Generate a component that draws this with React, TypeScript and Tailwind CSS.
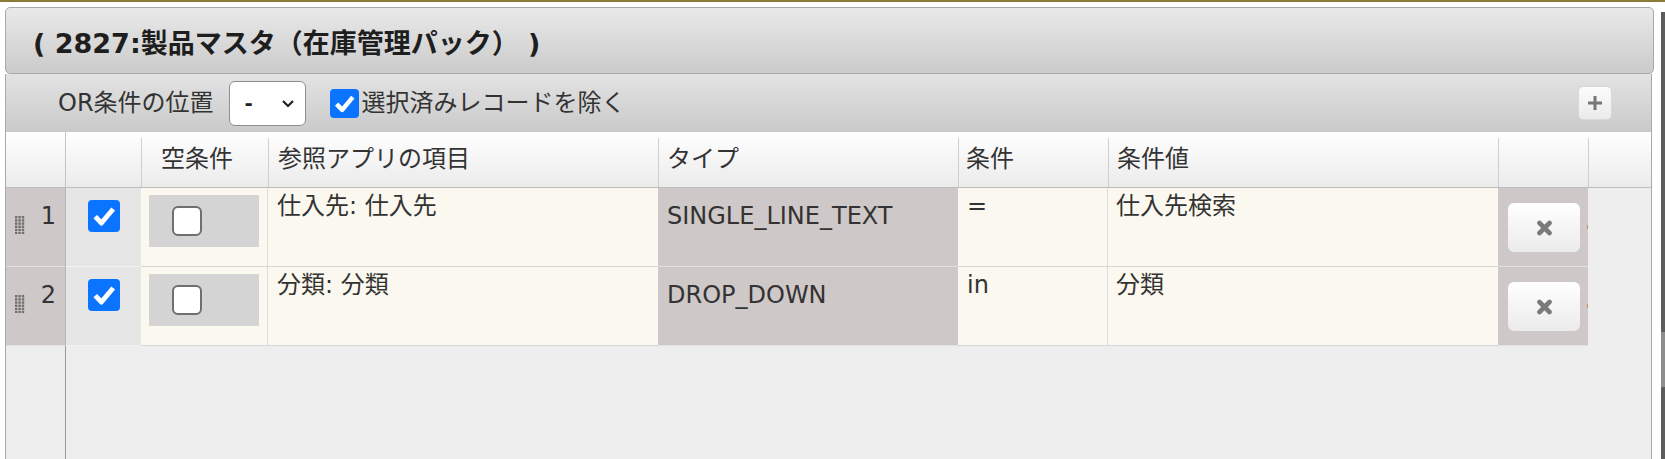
import React from "react";

type Condition = {
  no: number;
  field: string;
  type: string;
  op: string;
  value: string;
};

const conditions: Condition[] = [
  { no: 1, field: "仕入先: 仕入先", type: "SINGLE_LINE_TEXT", op: "=", value: "仕入先検索" },
  { no: 2, field: "分類: 分類", type: "DROP_DOWN", op: "in", value: "分類" },
];

function CheckedBox({ className }: { className: string }) {
  return (
    <span className={`flex items-center justify-center rounded-[4px] bg-[#0b74ff] ${className}`}>
      <svg viewBox="0 0 30 30" className="h-full w-full">
        <path d="M6.8 15.6 L12.6 21.6 L23.6 8.4" fill="none" stroke="#fff" strokeWidth="4.6" strokeLinejoin="round" />
      </svg>
    </span>
  );
}

function EmptyBox() {
  return <span className="block h-[30px] w-[30px] rounded-[6px] border-2 border-[#6f6f6f] bg-white" />;
}

function Grip() {
  const dots = [];
  for (let r = 0; r < 6; r++) {
    for (let c = 0; c < 3; c++) {
      dots.push(<rect key={`${r}-${c}`} x={c * 3.4} y={r * 3.2} width="2.4" height="2.4" />);
    }
  }
  return (
    <svg width="10" height="18" viewBox="0 0 10 18" className="fill-[#6e6e6e]">
      {dots}
    </svg>
  );
}

function CrossIcon() {
  return (
    <svg width="17" height="16" viewBox="0 0 17 16">
      <path d="M3.5 3 L13.5 13 M13.5 3 L3.5 13" stroke="#7a7a7a" strokeWidth="4.6" strokeLinecap="round" />
    </svg>
  );
}

function PlusIcon() {
  return (
    <svg width="14" height="14" viewBox="0 0 14 14" className="fill-[#777]">
      <rect x="0" y="5.5" width="14" height="3" />
      <rect x="5.5" y="0" width="3" height="14" />
    </svg>
  );
}

function Chevron() {
  return (
    <svg width="14" height="9" viewBox="0 0 14 9">
      <path d="M2 2 L7 7 L12 2" fill="none" stroke="#222" strokeWidth="2.2" />
    </svg>
  );
}

function PanelHeader() {
  return (
    <div className="flex h-[67px] shrink-0 items-center rounded-[5px] border border-[#a9a9a9] bg-gradient-to-b from-[#e9e9e9] to-[#cbcbcb] pl-[27px] pt-[8px]">
      <h1 className="text-[27px] font-bold text-[#1e1e1e]">( 2827:製品マスタ（在庫管理パック） )</h1>
    </div>
  );
}

function Toolbar() {
  return (
    <div className="flex h-[58px] shrink-0 items-center bg-gradient-to-b from-[#e3e3e3] to-[#cacaca] pl-[52px]">
      <span className="leading-none">OR条件の位置</span>
      <div className="ml-[15px] flex h-[45px] w-[77px] items-center justify-between rounded-[6px] border border-[#8f8f8f] bg-white pl-[15px] pr-[10px]">
        <span className="text-[20px] font-bold leading-none text-[#222]">-</span>
        <Chevron />
      </div>
      <CheckedBox className="ml-[24px] h-[29px] w-[29px]" />
      <span className="ml-[3px] leading-none">選択済みレコードを除く</span>
      <button className="ml-auto mr-[39px] flex h-[34px] w-[34px] items-center justify-center rounded-[5px] border border-[#d8d8d8] bg-gradient-to-b from-[#fbfbfb] to-[#ebebeb]">
        <PlusIcon />
      </button>
    </div>
  );
}

function TableHeader() {
  return (
    <div className="grid h-[56px] shrink-0 grid-cols-[60px_75px_127px_390px_300px_150px_390px_90px_1fr] border-b border-[#bdbdbd] bg-gradient-to-b from-white to-[#ebebeb] leading-[30px]">
      <div className="border-r border-[#c4c4c4]" />
      <div className="mt-[6px]" />
      <div className="mt-[6px] border-l border-[#cfcfcf] pl-[19px] pt-[6px]">空条件</div>
      <div className="mt-[6px] border-l border-[#cfcfcf] pl-[9px] pt-[6px]">参照アプリの項目</div>
      <div className="mt-[6px] border-l border-[#cfcfcf] pl-[8px] pt-[6px]">タイプ</div>
      <div className="mt-[6px] border-l border-[#cfcfcf] pl-[7px] pt-[6px]">条件</div>
      <div className="mt-[6px] border-l border-[#cfcfcf] pl-[8px] pt-[6px]">条件値</div>
      <div className="mt-[6px] border-l border-[#cfcfcf]" />
      <div className="mt-[6px] border-l border-[#cfcfcf]" />
    </div>
  );
}

function ConditionRow({ row }: { row: Condition }) {
  return (
    <div className="grid h-[79px] shrink-0 grid-cols-[60px_75px_127px_390px_300px_150px_390px_90px_1fr] leading-[30px]">
      <div className="flex items-start border-b border-r border-b-[#e4dfdf] border-r-[#b9b4b4] bg-[#cfc8c8]">
        <span className="ml-[9px] mt-[28px]">
          <Grip />
        </span>
        <span className="ml-auto mr-[9px] mt-[13px]">{row.no}</span>
      </div>
      <div className="flex justify-center border-b border-[#f1f1f1] bg-[#e6e6e6] pt-[12px]">
        <CheckedBox className="h-[32px] w-[32px]" />
      </div>
      <div className="border-b border-r border-b-[#d6d6d6] border-r-[#dcdcdc] bg-[#fbf9ef] px-[8px] pt-[7px]">
        <div className="flex h-[52px] items-center bg-[#d4d4d4] pl-[23px]">
          <EmptyBox />
        </div>
      </div>
      <div className="border-b border-[#d6d6d6] bg-[#fbf9ef] pl-[9px] pt-[3px]">{row.field}</div>
      <div className="border-b border-[#e4dfdf] bg-[#cfc8c8] pl-[9px] pt-[13px]">{row.type}</div>
      <div className="border-b border-r border-b-[#d6d6d6] border-r-[#dcdcdc] bg-[#fbf9ef] pl-[9px] pt-[3px]">{row.op}</div>
      <div className="border-b border-[#d6d6d6] bg-[#fbf9ef] pl-[8px] pt-[3px]">{row.value}</div>
      <div className="relative border-b border-[#e4dfdf] bg-[#cfc8c8] pl-[10px] pt-[15px]">
        <button className="flex h-[49px] w-[72px] items-center justify-center rounded-[6px] bg-gradient-to-b from-white to-[#ebebeb]">
          <CrossIcon />
        </button>
        <span className="absolute right-0 top-[37px] h-[4px] w-[1px] bg-[#c98d55]" />
      </div>
      <div className="bg-[#eeeeee]" />
    </div>
  );
}

export default function App() {
  return (
    <div className="relative flex h-[459px] w-full flex-col overflow-hidden border-t-2 border-[#8b7a3d] bg-white pl-[5px] pr-[11px] pt-[5px] font-['DejaVu_Sans','Noto_Sans_CJK_JP',sans-serif] text-[24px] text-[#333]">
      <PanelHeader />
      <div className="mr-[2px] flex flex-1 flex-col border-x border-[#a9a9a9]">
        <Toolbar />
        <TableHeader />
        {conditions.map((row) => (
          <ConditionRow key={row.no} row={row} />
        ))}
        <div className="flex flex-1 bg-[#eeeeee]">
          <div className="w-[60px] border-r border-[#9a9a9a]" />
        </div>
      </div>
      {/* window edge on the right */}
      <div className="absolute bottom-0 right-0 top-[10px] w-[4px] bg-[#5d5d5d]">
        <div className="mt-[320px] h-[55px] bg-[#8e8e8e]" />
      </div>
    </div>
  );
}
